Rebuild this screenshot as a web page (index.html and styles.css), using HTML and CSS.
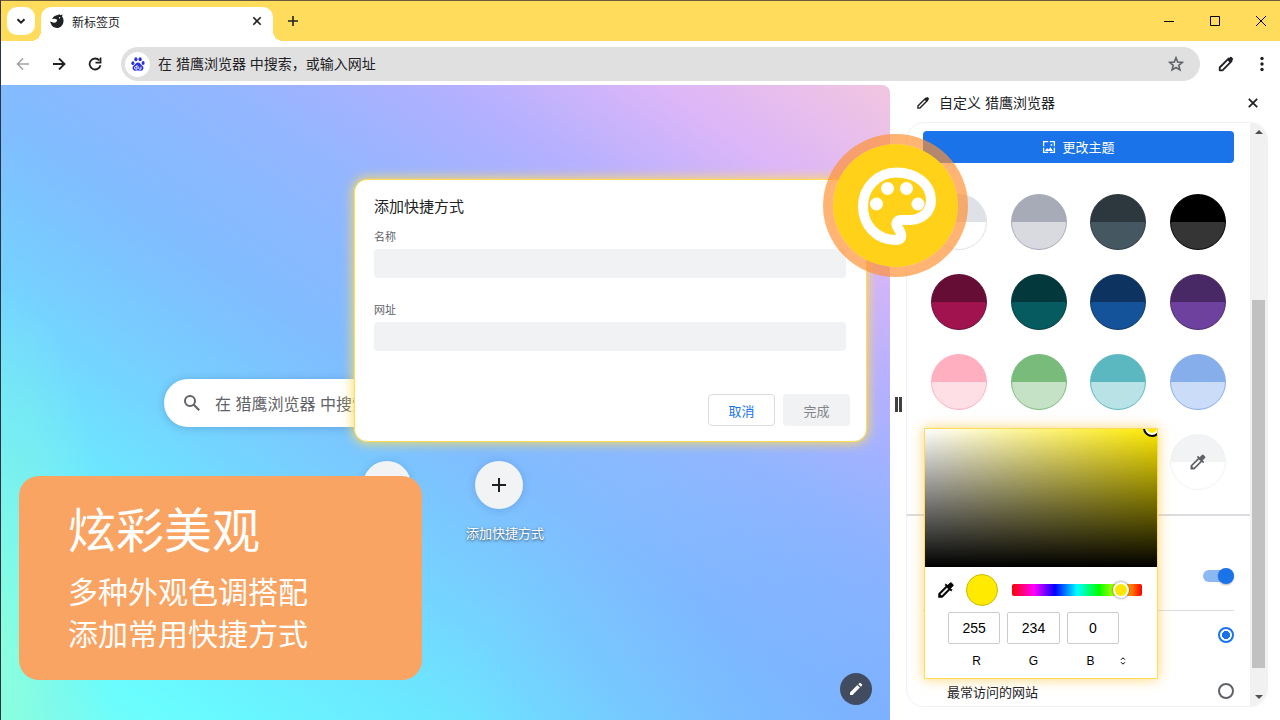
FILE: index.html
```html
<!DOCTYPE html>
<html lang="zh-CN">
<head>
<meta charset="utf-8">
<meta name="viewport" content="width=device-width, initial-scale=1">
<title>新标签页</title>
<link rel="stylesheet" href="styles.css">
</head>
<body>
<div class="browser">
  <header class="tabstrip">
    <button class="tab-search" aria-label="搜索标签页"><svg width="12" height="12" viewBox="0 0 12 12"><path d="M2.500 4.200 6 7.700l3.500-3.500" fill="none" stroke="#202124" stroke-width="2"/></svg></button>
    <div class="tab">
      <svg class="tab-logo" width="14" height="14" viewBox="0 0 14 14"><path fill="#202124" d="M6.500 1.200Q8.500 1.300 9.300 0l.9 1.300L12.500.4l-.4 2.300C13.300 4 13.700 5.500 13.500 7.500 13 11.500 10.300 14 7 14 4 14 1.500 12.200.8 9.600L0 7.500l1.600.6Q4.500 9.300 6.300 8 7.600 6.500 6.600 5.300 5.300 4.200 2 5 3.500 2 6.500 1.200Z"/><circle cx="9.600" cy="3.700" r=".7" fill="#fff"/></svg>
      <span class="tab-title">新标签页</span>
      <button class="icon-btn" aria-label="关闭标签页"><svg width="10" height="10" viewBox="0 0 10 10"><path d="m1.300 1.300 7.400 7.400m0-7.400L1.300 8.700" stroke="#202124" stroke-width="1.600"/></svg></button>
    </div>
    <button class="icon-btn new-tab" aria-label="打开新的标签页"><svg width="12" height="12" viewBox="0 0 12 12"><path d="M6 1v10M1 6h10" stroke="#202124" stroke-width="1.600"/></svg></button>
    <div class="window-controls">
      <button aria-label="最小化"><svg width="12" height="12" viewBox="0 0 12 12"><path d="M1 6.500h10" stroke="#000"/></svg></button>
      <button aria-label="最大化"><svg width="12" height="12" viewBox="0 0 12 12"><path d="M1.500 1.500h9v9h-9z" fill="none" stroke="#000"/></svg></button>
      <button aria-label="关闭"><svg width="12" height="12" viewBox="0 0 12 12"><path d="m1 1 10 10m0-10L1 11" stroke="#000"/></svg></button>
    </div>
  </header>

  <nav class="toolbar">
    <button class="icon-btn" aria-label="后退"><svg width="14" height="14" viewBox="0 0 14 14"><path d="M13 7H2m5-5.500L1.500 7 7 12.500" fill="none" stroke="#a3a3a3" stroke-width="1.600"/></svg></button>
    <button class="icon-btn" aria-label="前进"><svg width="14" height="14" viewBox="0 0 14 14"><path d="M1 7h11M7 1.500 12.500 7 7 12.500" fill="none" stroke="#202124" stroke-width="1.800"/></svg></button>
    <button class="icon-btn" aria-label="重新加载"><svg width="14" height="14" viewBox="0 0 14 14"><path d="M12.500 8.200A5.500 5.500 0 1 1 11.300 3.400" fill="none" stroke="#202124" stroke-width="1.800"/><path d="M12.500.6v5h-5" fill="none" stroke="#202124" stroke-width="1.800"/></svg></button>
    <div class="omnibox">
      <span class="engine"><svg width="14" height="14" viewBox="0 0 14 14" fill="#2932e1"><ellipse cx="1.900" cy="6.200" rx="1.500" ry="1.900"/><ellipse cx="4.900" cy="2.300" rx="1.600" ry="2"/><ellipse cx="9.100" cy="2.300" rx="1.600" ry="2"/><ellipse cx="12.100" cy="6" rx="1.500" ry="1.900"/><path d="M7 5.400c1.900 0 2.500 1.700 3.900 2.900 1.800 1.500 1.900 3.200.9 4.500-1.100 1.400-2.700.8-4.800.8s-3.700.6-4.800-.8c-1-1.300-.9-3 .9-4.500C4.500 7.100 5.100 5.400 7 5.400Z"/><path d="M6 8v4.200H4.800a1.200 1.200 0 0 1 0-2.600H6m1.700 0v1.900q0 .7.800.7h1.500V9.600" fill="none" stroke="#fff" stroke-width=".9"/></svg></span>
      <input class="address" type="text" aria-label="地址栏" placeholder="在 猎鹰浏览器 中搜索，或输入网址">
      <button class="icon-btn" aria-label="添加书签"><svg width="16" height="16" viewBox="0 0 16 16"><path d="m8 1.800 1.700 4.300 4.600.3-3.500 3 1.100 4.500L8 11.500l-3.900 2.400 1.100-4.500-3.500-3 4.600-.3Z" fill="none" stroke="#5f6368" stroke-width="1.600"/></svg></button>
    </div>
    <button class="icon-btn" aria-label="自定义"><svg width="16" height="16" viewBox="0 0 16 16"><path d="M1.700 11.500 10.800 2.400l2.800 2.800-9.100 9.100H1.700Z" fill="none" stroke="#202124" stroke-width="1.800" stroke-linejoin="round"/><path d="m9.300 4 2.900-2.900q.7-.5 1.400 0l1.300 1.300q.5.700 0 1.400L12 6.700Z" fill="#202124"/></svg></button>
    <button class="icon-btn" aria-label="菜单"><svg width="4" height="16" viewBox="0 0 4 16" fill="#202124"><circle cx="2" cy="2.500" r="1.700"/><circle cx="2" cy="8" r="1.700"/><circle cx="2" cy="13.500" r="1.700"/></svg></button>
  </nav>

  <main class="content">
    <section class="ntp">
      <div class="search">
        <svg width="18" height="18" viewBox="0 0 18 18"><circle cx="7" cy="7" r="5" fill="none" stroke="#5f6368" stroke-width="2"/><path d="m10.800 10.800 5.400 5.400" stroke="#5f6368" stroke-width="2.200"/></svg>
        <input type="text" aria-label="搜索" placeholder="在 猎鹰浏览器 中搜索，或输入网址">
      </div>
      <div class="shortcuts">
        <button class="shortcut" aria-label="快捷方式"><span class="shortcut-icon"></span></button>
        <button class="shortcut"><span class="shortcut-icon"><svg width="14" height="14" viewBox="0 0 14 14"><path d="M7 0v14M0 7h14" stroke="#202124" stroke-width="2"/></svg></span><span class="shortcut-label">添加快捷方式</span></button>
      </div>
      <button class="customize" aria-label="自定义此页"><svg width="16" height="16" viewBox="0 0 16 16" fill="#fff"><path d="M2 11.500V14h2.500l7.400-7.400-2.500-2.500Zm8.300-8.300 1.300-1.300q.4-.3.800 0l1.700 1.700q.3.400 0 .8l-1.300 1.300Z"/></svg></button>
    </section>

    <div class="splitter"><i></i><i></i></div>

    <aside class="panel">
      <div class="panel-head">
        <svg width="14" height="14" viewBox="0 0 16 16"><path d="M2.200 11.500 10.800 2.900l2.300 2.300-8.600 8.600H2.200Z" fill="none" stroke="#202124" stroke-width="1.600"/><path d="m9.500 4 2.700-2.700q.7-.5 1.300 0l1.200 1.200q.5.700 0 1.300L12 6.500Z" fill="#202124"/></svg>
        <h2>自定义 猎鹰浏览器</h2>
        <button class="icon-btn" aria-label="关闭侧边栏"><svg width="10" height="10" viewBox="0 0 10 10"><path d="m.8.8 8.400 8.400m0-8.400L.8 9.200" stroke="#202124" stroke-width="1.800"/></svg></button>
      </div>
      <div class="card">
        <div class="card-body">
          <button class="theme-btn"><svg width="14" height="14" viewBox="0 0 14 14" fill="none" stroke="#fff" stroke-width="1.300"><path d="M1.600 6.200V1.600h4.600m1.600 0h4.600v4.600m0 1.600v4.600H7.800m-1.600 0H1.600V7.800"/><path d="m3 11 2-3 1.500 1.600 2-2.300L11 11Z" fill="#fff" stroke="none"/><circle cx="9.400" cy="4.900" r=".9" fill="#fff" stroke="none"/></svg>更改主题</button>
          <div class="swatches">
            <button class="swatch s-light" aria-label="浅色"></button><button class="swatch s-grey" aria-label="灰色"></button><button class="swatch s-slate" aria-label="石板色"></button><button class="swatch s-black" aria-label="黑色"></button>
            <button class="swatch s-wine" aria-label="酒红色"></button><button class="swatch s-teal" aria-label="深青色"></button><button class="swatch s-navy" aria-label="深蓝色"></button><button class="swatch s-purple" aria-label="紫色"></button>
            <button class="swatch s-pink" aria-label="粉色"></button><button class="swatch s-green" aria-label="绿色"></button><button class="swatch s-aqua" aria-label="水绿色"></button><button class="swatch s-blue" aria-label="蓝色"></button>
            <button class="swatch s-custom" aria-label="自定义颜色"><svg width="20" height="20" viewBox="0 0 24 24" fill="#5f6368"><path d="m20.700 5.600-2.300-2.300a1 1 0 0 0-1.400 0l-3.100 3.100L12 4.500l-1.400 1.400L12 7.300l-9 9V21h4.700l9-9 1.400 1.400 1.400-1.400-1.900-1.900 3.100-3.100a1 1 0 0 0 0-1.400ZM6.900 19 5 17.100l8.100-8.100L15 10.900Z"/></svg></button>
          </div>
          <div class="toggle-row"><input class="toggle" type="checkbox" role="switch" aria-label="显示快捷方式" checked></div>
          <div class="choices">
            <div class="choice"><input type="radio" name="kind" aria-label="我的快捷方式" checked></div>
            <div class="choice"><label for="most">最常访问的网站</label><input id="most" type="radio" name="kind"></div>
          </div>
        </div>
        <div class="scrollbar">
          <svg width="8" height="5" viewBox="0 0 8 5"><path d="M0 5 4 1l4 4Z" fill="#505050"/></svg>
          <div class="track"><div class="thumb"></div></div>
          <svg width="8" height="5" viewBox="0 0 8 5"><path d="m0 0 4 4 4-4Z" fill="#505050"/></svg>
        </div>
      </div>
    </aside>

    <form class="picker">
      <div class="shade"><span class="shade-dot"></span></div>
      <div class="picker-row">
        <button type="button" class="icon-btn" aria-label="吸管"><svg width="20" height="20" viewBox="0 0 24 24"><path d="m20.700 5.600-2.300-2.300a1 1 0 0 0-1.400 0l-3.100 3.100L12 4.500l-1.400 1.400L12 7.300l-9 9V21h4.700l9-9 1.400 1.400 1.400-1.400-1.900-1.900 3.100-3.100a1 1 0 0 0 0-1.400ZM6.900 19 5 17.100l8.100-8.100L15 10.900Z" stroke="#000" stroke-width=".6"/></svg></button>
        <span class="preview"></span>
        <input class="hue" type="range" min="0" max="360" value="320" aria-label="色相">
      </div>
      <div class="values">
        <input id="r" type="text" value="255"><input id="g" type="text" value="234"><input id="b" type="text" value="0">
      </div>
      <div class="names">
        <label for="r">R</label><label for="g">G</label><label for="b">B</label>
        <button type="button" class="icon-btn" aria-label="切换格式"><svg width="6" height="8" viewBox="0 0 6 8"><path d="M1 2.800 3 .8l2 2m0 2.400-2 2-2-2" fill="none" stroke="#000"/></svg></button>
      </div>
    </form>

    <form class="dialog" role="dialog" aria-labelledby="dlg-title">
      <h1 id="dlg-title">添加快捷方式</h1>
      <label for="name">名称</label>
      <input id="name" type="text">
      <label for="url">网址</label>
      <input id="url" type="text">
      <div class="dialog-actions">
        <button type="button" class="cancel">取消</button>
        <button type="button" class="done" disabled>完成</button>
      </div>
    </form>

    <div class="badge">
      <svg width="80" height="80" viewBox="0 0 80 80"><path d="M40.500 6.500C59.500 6.500 75 17.500 75 34.500 75 46 65.500 54 54 54h-8.500c-5 0-6.200 3.800-4 7.300 3.800 5 6.500 12.700-1.500 12.700C20.500 74 7 59 7 40.500 7 21.500 21.500 6.500 40.500 6.500Z" fill="none" stroke="#fff" stroke-width="10"/><g fill="#fff"><circle cx="31.500" cy="22.500" r="6.500"/><circle cx="50.500" cy="22.500" r="6.500"/><circle cx="20.500" cy="38" r="6.500"/><circle cx="62" cy="38" r="6.500"/></g></svg>
    </div>

    <div class="promo">
      <h2>炫彩美观</h2>
      <p>多种外观色调搭配</p>
      <p>添加常用快捷方式</p>
    </div>
  </main>
</div>
</body>
</html>
```

FILE: styles.css
```css
* { box-sizing: border-box; }
body {
  margin: 0;
  font-family: "Liberation Sans", "Noto Sans CJK SC", sans-serif;
  font-size: 13px;
  color: #202124;
}
h1, h2, p { margin: 0; font-weight: inherit; }
button, input { font: inherit; color: inherit; margin: 0; }
button { border: 0; padding: 0; background: none; }
svg { display: block; flex: none; }

.browser {
  display: flex;
  flex-direction: column;
  min-height: 100vh;
  background: #fff;
  border-top: 1px solid #6b5d3a;
  border-left: 1px solid #2b3440;
}
.icon-btn {
  display: flex;
  align-items: center;
  justify-content: center;
  width: 24px;
  height: 24px;
  flex: none;
}

/* Tab strip */
.tabstrip {
  display: flex;
  align-items: center;
  height: 40px;
  padding-left: 6px;
  background: #ffdc5c;
}
.tab-search {
  display: flex;
  align-items: center;
  justify-content: center;
  width: 28px;
  height: 28px;
  border-radius: 10px;
  background: #fff;
}
.tab {
  position: relative;
  display: flex;
  align-items: center;
  gap: 8px;
  width: 232px;
  height: 34px;
  margin: 6px 0 0 6px;
  padding: 0 4px 6px 9px;
  border-radius: 10px 10px 0 0;
  background: #fff;
}
.tab::before, .tab::after {
  content: "";
  position: absolute;
  bottom: 0;
  width: 10px;
  height: 10px;
}
.tab::before { right: 100%; background: radial-gradient(circle at 0 0, transparent 10px, #fff 10px); }
.tab::after { left: 100%; background: radial-gradient(circle at 100% 0, transparent 10px, #fff 10px); }
.tab-title { flex: 1; font-size: 12px; }
.new-tab { margin-left: 8px; }
.window-controls { display: flex; gap: 8px; margin-left: auto; }
.window-controls button {
  display: flex;
  align-items: center;
  justify-content: center;
  width: 38px;
  height: 38px;
}

/* Toolbar */
.toolbar {
  display: flex;
  align-items: center;
  gap: 12px;
  height: 44px;
  padding: 2px 6px 0 10px;
}
.omnibox {
  display: flex;
  align-items: center;
  flex: 1;
  height: 34px;
  margin: 0 2px;
  padding: 0 12px 0 4px;
  border-radius: 17px;
  background: #e0e0e0;
}
.engine {
  display: flex;
  align-items: center;
  justify-content: center;
  width: 25px;
  height: 25px;
  border-radius: 50%;
  background: #fff;
}
.address {
  flex: 1;
  min-width: 0;
  padding: 0 8px;
  border: 0;
  background: none;
  font-size: 14px;
}
.address::placeholder { color: #202124; opacity: 1; }

/* New tab page */
.content { position: relative; display: flex; flex: 1; }
.ntp {
  position: relative;
  flex: 1;
  display: flex;
  flex-direction: column;
  align-items: center;
  padding-top: 294px;
  border-top-right-radius: 8px;
  background:
    radial-gradient(ellipse 110px 360px at 0 88%, #98ffd0aa 0, #90f4d866 50%, #88f0e000 100%),
    radial-gradient(ellipse 420px 300px at 100% 100%, #78a8ff88 0, #78a8ff00 100%),
    linear-gradient(35deg, #7cfff0 0, #68fcff 10%, #6be8ff 24%, #76d0ff 36%, #80bcff 48%, #92b6ff 62%, #b2b0ff 75%, #dcb6f8 87%, #f2c6e0 100%);
}
.search {
  display: flex;
  align-items: center;
  gap: 14px;
  width: 563px;
  height: 48px;
  padding: 0 19px;
  border-radius: 24px;
  background: #fff;
  box-shadow: 0 1px 8px rgba(32, 60, 100, .25);
}
.search input { flex: 1; border: 0; padding: 3px 0 0; background: none; font-size: 16px; }
.search input::placeholder { color: #5f6368; opacity: 1; }
.shortcuts { display: flex; margin: 34px 5px 0 0; }
.shortcut {
  display: flex;
  flex-direction: column;
  align-items: center;
  gap: 14px;
  width: 112px;
  color: #fff;
  text-shadow: 0 1px 3px rgba(0, 0, 0, .7);
}
.shortcut-label { padding-left: 12px; }
.shortcut-icon {
  display: flex;
  align-items: center;
  justify-content: center;
  width: 48px;
  height: 48px;
  border-radius: 50%;
  background: #f1f3f4;
  box-shadow: 0 1px 8px rgba(32, 60, 130, .2);
}
.customize {
  position: absolute;
  right: 18px;
  bottom: 15px;
  display: flex;
  align-items: center;
  justify-content: center;
  width: 32px;
  height: 32px;
  border-radius: 50%;
  background: #414c61;
}

/* Side panel */
.splitter {
  display: flex;
  align-items: center;
  justify-content: center;
  gap: 1px;
  width: 16px;
  padding-top: 4px;
}
.splitter i { width: 3px; height: 15px; background: #404040; }
.panel { display: flex; flex-direction: column; width: 374px; padding: 0 12px 13px 0; }
.panel-head { display: flex; align-items: center; height: 37px; gap: 9px; padding: 0 3px 1px 10px; }
.panel-head h2 { flex: 1; font-size: 14px; line-height: 20px; }
.card {
  display: flex;
  flex: 1;
  border: 1px solid #f1f1f1;
  border-radius: 18px;
  overflow: hidden;
}
.card-body { flex: 1; padding-top: 8px; }
.theme-btn {
  display: flex;
  align-items: center;
  justify-content: center;
  gap: 6px;
  width: calc(100% - 32px);
  height: 32px;
  margin: 0 16px;
  padding-bottom: 1px;
  border-radius: 4px;
  background: #1a73e8;
  color: #fff;
}
.swatches {
  display: grid;
  grid-template-columns: repeat(4, 56px);
  justify-content: space-between;
  gap: 24px 0;
  padding: 31px 24px 24px;
  border-bottom: 2px solid #dadce0;
}
.swatch {
  display: flex;
  align-items: center;
  justify-content: center;
  height: 56px;
  border: 1px solid var(--top);
  border-radius: 50%;
  background: linear-gradient(var(--top) 50%, var(--bottom) 50%);
}
.s-light { --top: #dee1e6; --bottom: #fff; }
.s-grey { --top: #a7abb7; --bottom: #d8dae0; }
.s-slate { --top: #2d383e; --bottom: #455760; }
.s-black { --top: #000; --bottom: #353535; }
.s-wine { --top: #650d34; --bottom: #a0134f; }
.s-teal { --top: #03393d; --bottom: #055b60; }
.s-navy { --top: #0d3461; --bottom: #14539a; }
.s-purple { --top: #482965; --bottom: #6f419f; }
.s-pink { --top: #ffafbf; --bottom: #ffdfe6; }
.s-green { --top: #79bb7b; --bottom: #c5e2c6; }
.s-aqua { --top: #5bb8c1; --bottom: #b8e2e5; }
.s-blue { --top: #85aeeb; --bottom: #cbdcf8; }
.s-custom { --top: #f1f3f4; --bottom: #fff; grid-column: 4; }
.toggle-row {
  display: flex;
  justify-content: flex-end;
  align-items: flex-end;
  height: 95px;
  margin: 0 16px;
  padding-bottom: 28px;
  border-bottom: 1px solid #dadce0;
}
.toggle {
  appearance: none;
  position: relative;
  width: 31px;
  height: 12px;
  border-radius: 6px;
  background: #8cb8f3;
}
.toggle::before {
  content: "";
  position: absolute;
  right: 0;
  top: -2px;
  width: 16px;
  height: 16px;
  border-radius: 50%;
  background: #1a73e8;
  box-shadow: 0 1px 2px rgba(0, 0, 0, .3);
}
.choices { display: flex; flex-direction: column; gap: 26px; padding: 9px 16px 0 40px; }
.choice { display: flex; align-items: center; height: 30px; }
.choice label { padding-top: 4px; line-height: 20px; }
.choice input {
  appearance: none;
  width: 16px;
  height: 16px;
  margin-left: auto;
  border: 2px solid #5f6368;
  border-radius: 50%;
}
.choice input:checked {
  border-color: #1a73e8;
  background: radial-gradient(circle, #1a73e8 4px, #fff 4px);
}
.scrollbar {
  display: flex;
  flex-direction: column;
  align-items: center;
  width: 17px;
  padding: 6px 0;
  background: #f1f1f1;
}
.track { flex: 1; display: flex; flex-direction: column; padding: 166px 0 27px; }
.thumb { flex: 1; width: 13px; background: #c1c1c1; }

/* Color picker popup */
.picker {
  position: absolute;
  right: 122px;
  top: 343px;
  width: 234px;
  border: 1px solid #ffdb5c;
  background: #fff;
  box-shadow: 0 0 12px rgba(255, 190, 40, .65);
}
.shade {
  position: relative;
  height: 138px;
  overflow: hidden;
  background: linear-gradient(transparent, #000), linear-gradient(90deg, #fff, #ffea00);
}
.shade-dot {
  position: absolute;
  right: -4px;
  top: -10px;
  width: 18px;
  height: 18px;
  border: 2px solid #000;
  border-radius: 50%;
  background: #ffea00;
  box-shadow: inset 0 0 0 2px #fff;
}
.picker-row { display: flex; align-items: center; padding: 7px 15px 6px 9px; }
.preview {
  width: 32px;
  height: 32px;
  margin: 0 14px 0 8px;
  border: 1px solid #ccbb00;
  border-radius: 50%;
  background: #ffea00;
}
.hue {
  appearance: none;
  flex: 1;
  min-width: 0;
  height: 12px;
  border-radius: 2px;
  background: linear-gradient(90deg, #f00, #f0f 17%, #00f 33%, #0ff 50%, #0f0 67%, #ff0 83%, #f00);
}
.hue::-webkit-slider-thumb {
  appearance: none;
  width: 16px;
  height: 16px;
  border: 2px solid #fff;
  border-radius: 50%;
  background: #ffe600;
  box-shadow: 0 0 3px rgba(0, 0, 0, .6);
}
.values { display: flex; gap: 7px; padding: 0 38px 0 23px; }
.values input {
  flex: 1;
  min-width: 0;
  height: 32px;
  padding: 0;
  border: 1px solid #ccc;
  border-radius: 2px;
  text-align: center;
  font-size: 14px;
  color: #000;
}
.names {
  display: grid;
  grid-template-columns: repeat(3, 57px) 8px;
  align-items: center;
  height: 34px;
  padding-left: 23px;
  text-align: center;
  font-size: 12px;
  color: #000;
}
.names .icon-btn { width: 8px; }

/* Add shortcut dialog */
.dialog {
  position: absolute;
  left: 353px;
  top: 94px;
  display: flex;
  flex-direction: column;
  width: 513px;
  padding: 17px 20px 15px 19px;
  border: 1px solid #ffdc5c;
  border-radius: 13px;
  background: #fff;
  box-shadow: 0 0 12px 1px #ffdc5c;
}
.dialog h1 { font-size: 15px; line-height: 20px; margin-bottom: 11px; }
.dialog label { font-size: 11px; line-height: 18px; margin-bottom: 3px; color: #5f6368; }
.dialog input {
  height: 29px;
  margin-bottom: 23px;
  padding: 0 8px;
  border: 0;
  border-radius: 4px;
  background: #f1f2f4;
}
.dialog-actions { display: flex; justify-content: flex-end; gap: 8px; margin-top: 20px; margin-right: -4px; }
.dialog-actions button { width: 67px; height: 32px; border-radius: 4px; }
.cancel { border: 1px solid #dadce0; color: #1a73e8; }
.done { background: #f1f2f4; color: #80868b; }

/* Palette badge */
.badge {
  position: absolute;
  left: 822px;
  top: 49px;
  display: flex;
  align-items: center;
  justify-content: center;
  width: 145px;
  height: 143px;
  border: 10px solid rgba(255, 145, 50, .68);
  border-radius: 50%;
  background: #ffd119;
  background-clip: padding-box;
}

/* Promo caption */
.promo {
  position: absolute;
  left: 18px;
  top: 391px;
  width: 403px;
  padding: 24px 50px 24px 49px;
  border-radius: 20px;
  background: #faa463;
  color: #fff;
  font-size: 30px;
  line-height: 42px;
}
.promo h2 { margin-bottom: 8px; font-size: 48px; line-height: 64px; }
```
